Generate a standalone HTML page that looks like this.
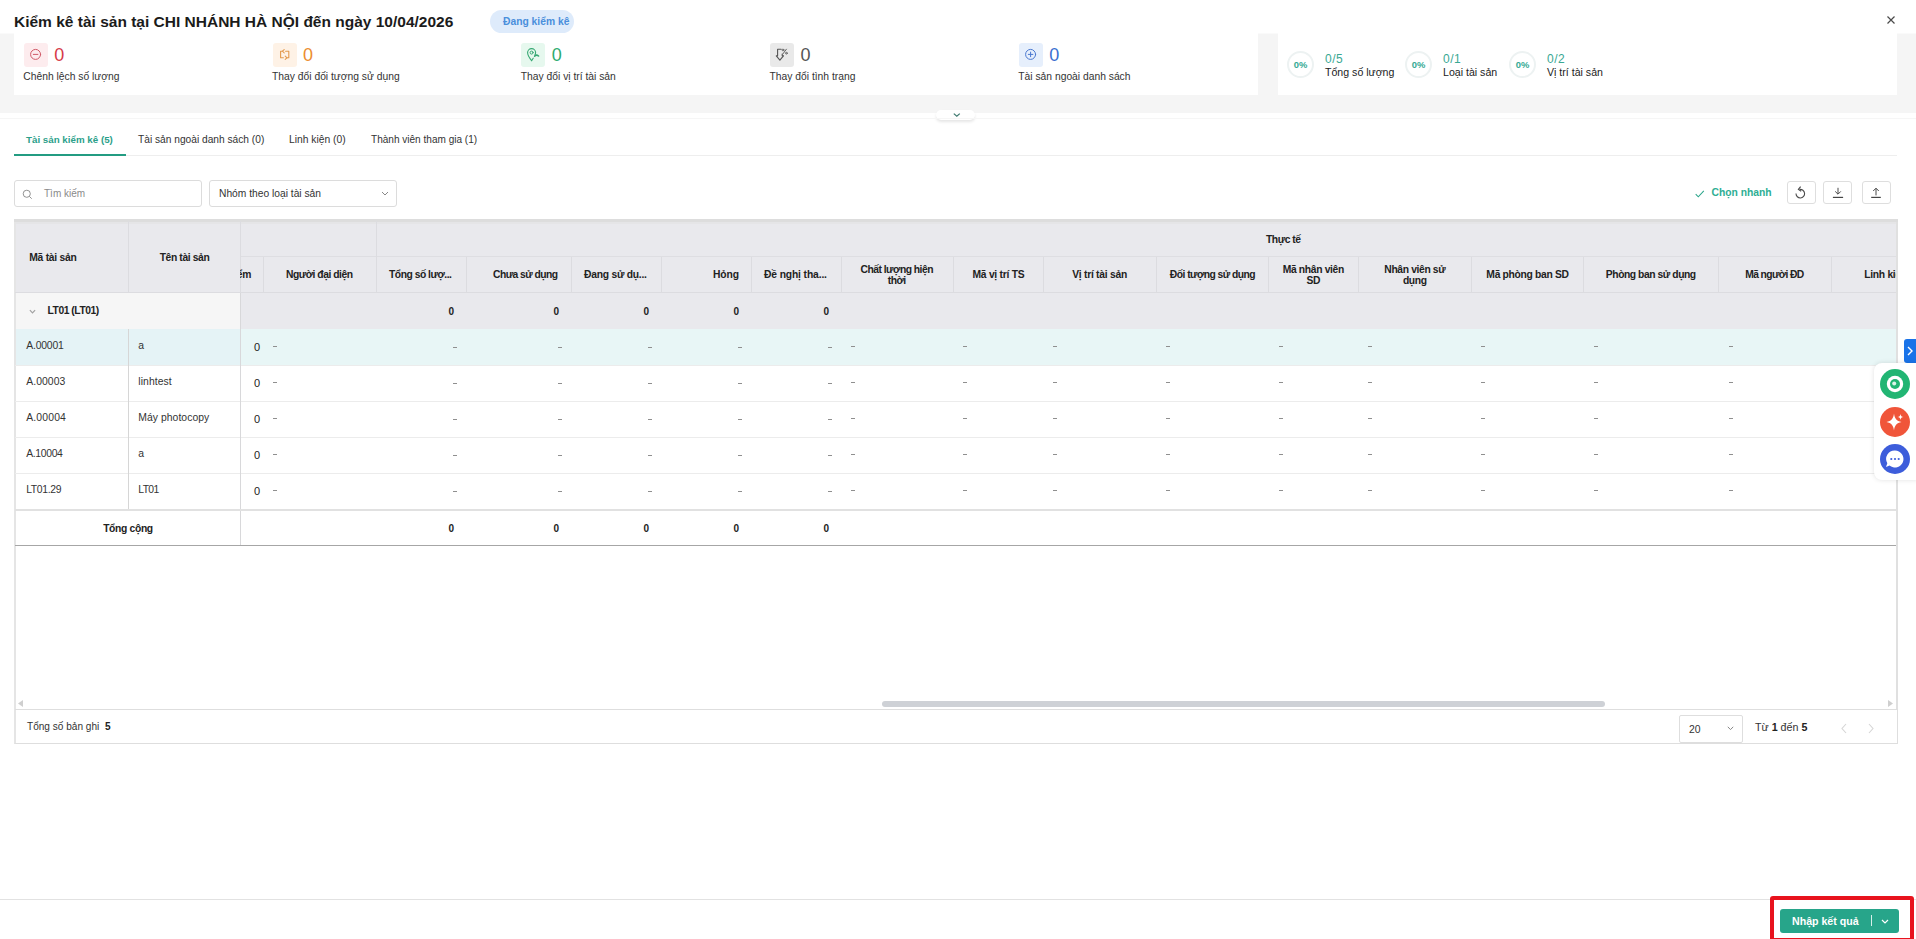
<!DOCTYPE html>
<html lang="vi">
<head>
<meta charset="utf-8">
<title>Kiểm kê tài sản</title>
<style>
*{box-sizing:border-box;margin:0;padding:0}
html,body{width:1916px;height:939px;overflow:hidden;background:#fff}
body{position:relative;font-family:"Liberation Sans",sans-serif;font-size:10.4px;color:#212121}
.a{position:absolute;white-space:nowrap}
.t{position:absolute;white-space:nowrap;line-height:14px}
svg{position:absolute;overflow:visible}
/* header */
#title{left:14px;top:12px;font-size:15.5px;line-height:20px;font-weight:bold;color:#1b1b1b}
#badge{left:490px;top:10px;width:84px;height:23px;border-radius:12px;background:#deebfb;color:#4a8fdc;font-size:10.3px;line-height:23px;text-align:left;padding-left:13px;font-weight:bold}
#band{left:0;top:34px;width:1916px;height:79px;background:#f5f5f5}
.card{position:absolute;background:#fff;top:0;height:61px}
.ib{position:absolute;top:9px;width:24px;height:24px;border-radius:3px}
.num{position:absolute;top:10px;font-size:18px;line-height:22px}
.lbl{position:absolute;top:36px;font-size:10.3px;line-height:14px;color:#333}
.circ{position:absolute;top:17px;width:27px;height:27px;border-radius:50%;border:2px solid #edf2f2;color:#35a994;font-size:9.4px;font-weight:bold;line-height:23px;text-align:center}
.frac{position:absolute;top:18px;font-size:12px;letter-spacing:.55px;line-height:14px;color:#3aa893}
.flbl{position:absolute;top:31px;font-size:10.6px;line-height:14px;color:#222}
/* tabs */
.tab{position:absolute;top:133px;font-size:10.3px;line-height:14px;color:#333;white-space:nowrap}
/* toolbar */
.inp{position:absolute;top:180px;height:27px;border:1px solid #dcdcdc;border-radius:3px;background:#fff}
.ibtn{position:absolute;top:180.6px;width:29px;height:23px;border:1px solid #dedede;border-radius:3px;background:#fff}
/* table */
.hc{position:absolute;font-weight:bold;font-size:10.2px;line-height:11px;color:#222;text-align:center;white-space:nowrap}
.vl{position:absolute;width:1px;background:#dcdce0}
.hl{position:absolute;height:1px;background:#ececec}
.c{position:absolute;font-size:10.4px;line-height:14px;color:#333;white-space:nowrap}
.b{font-weight:bold;color:#222}
.d{color:#777}
</style>
</head>
<body>
<div class="t" id="title">Kiểm kê tài sản tại CHI NHÁNH HÀ NỘI đến ngày 10/04/2026</div>
<div class="a" id="badge">Đang kiểm kê</div>
<svg style="left:1885.5px;top:14.6px" width="10" height="10" viewBox="0 0 10 10"><path d="M1.5 1.5 L8.5 8.5 M8.5 1.5 L1.5 8.5" stroke="#4a4a4a" stroke-width="1.2" fill="none"/></svg>
<div class="a" id="band">
<div class="card" style="left:14px;width:1244px">
<div class="ib" style="left:9.80px;background:#fdecee"><svg style="left:0;top:0" width="24" height="24" viewBox="0 0 24 24" fill="none" stroke="#cf5a68" stroke-linecap="round" stroke-linejoin="round"><circle cx="11.6" cy="11.4" r="5" stroke-width="1"/><path d="M9.3 11.4H13.9" stroke-width="1"/></svg></div>
<div class="num" style="left:40.30px;color:#d63a48">0</div>
<div class="lbl" style="left:9.30px">Chênh lệch số lượng</div>
<div class="ib" style="left:258.55px;background:#fef2e6"><svg style="left:0;top:0" width="24" height="24" viewBox="0 0 24 24" fill="none" stroke="#e39a4e" stroke-linecap="round" stroke-linejoin="round"><path d="M9.4 8.2H7.6V14.8H10.4M13.6 14.8H15.8V8.2H12.6" stroke-width="1.1"/><path d="M11.2 6.6L9.4 8.2L11.2 9.8M12.2 13.2L14 14.8L12.2 16.4" stroke-width="1.1"/></svg></div>
<div class="num" style="left:289.05px;color:#ec8d2f">0</div>
<div class="lbl" style="left:258.05px">Thay đổi đối tượng sử dụng</div>
<div class="ib" style="left:507.30px;background:#e6f8ee"><svg style="left:0;top:0" width="24" height="24" viewBox="0 0 24 24" fill="none" stroke="#37a873" stroke-linecap="round" stroke-linejoin="round"><path d="M10.6 17.6C10.6 17.6 6.6 13 6.6 9.6A4 4 0 0 1 14.6 9.6C14.6 10.4 14.3 11.3 13.9 12.2" stroke-width="1.1"/><circle cx="10.6" cy="9.6" r="1.5" stroke-width="1"/><path d="M10.6 17.6L12.2 15.2" stroke-width="1.1"/><path d="M13.6 13.2C14.6 12 16.2 11.9 17.6 13" stroke-width="1.5"/></svg></div>
<div class="num" style="left:537.80px;color:#2eab6f">0</div>
<div class="lbl" style="left:506.80px">Thay đổi vị trí tài sản</div>
<div class="ib" style="left:756.05px;background:#e9e9e9"><svg style="left:0;top:0" width="24" height="24" viewBox="0 0 24 24" fill="none" stroke="#555555" stroke-linecap="round" stroke-linejoin="round"><path d="M11.2 6.2H7.6V12.8H6.3L9.9 17.2L13.5 12.8H12.2V11" stroke-width="1.1"/><path d="M16.4 6.2L12.8 11" stroke-width="0.9"/><circle cx="13" cy="7" r="0.9" stroke-width="0.8"/><circle cx="16.4" cy="10.2" r="0.9" stroke-width="0.8"/></svg></div>
<div class="num" style="left:786.55px;color:#555555">0</div>
<div class="lbl" style="left:755.55px">Thay đổi tình trạng</div>
<div class="ib" style="left:1004.80px;background:#e6effc"><svg style="left:0;top:0" width="24" height="24" viewBox="0 0 24 24" fill="none" stroke="#4a78d0" stroke-linecap="round" stroke-linejoin="round"><circle cx="11.6" cy="11.4" r="5" stroke-width="1"/><path d="M9.3 11.4H13.9M11.6 9.1V13.7" stroke-width="1"/></svg></div>
<div class="num" style="left:1035.30px;color:#3a6fd0">0</div>
<div class="lbl" style="left:1004.30px">Tài sản ngoài danh sách</div>
</div>
<div class="card" style="left:1278px;width:619px">
<div class="circ" style="left:9px">0%</div><div class="frac" style="left:47px">0/5</div><div class="flbl" style="left:47px">Tổng số lượng</div>
<div class="circ" style="left:127px">0%</div><div class="frac" style="left:165px">0/1</div><div class="flbl" style="left:165px">Loại tài sản</div>
<div class="circ" style="left:231px">0%</div><div class="frac" style="left:269px">0/2</div><div class="flbl" style="left:269px">Vị trí tài sản</div>
</div>
</div>
<div class="a" style="left:0px;top:33px;width:14px;height:1px;background:#fafafa"></div>
<div class="a" style="left:1258px;top:33px;width:20px;height:1px;background:#fafafa"></div>
<div class="a" style="left:1897px;top:33px;width:19px;height:1px;background:#fafafa"></div>
<div class="a" style="left:936px;top:110px;width:39px;height:10px;border-radius:5px;background:#fff;box-shadow:0 2px 3px rgba(0,0,0,.10)"></div>
<svg style="left:952.5px;top:112.8px" width="7.6" height="4" viewBox="0 0 8 4.4"><path d="M0.7 0.7L4 3.6L7.3 0.7" fill="none" stroke="#3f7a70" stroke-width="1.4"/></svg>
<div class="a" style="left:0;top:118px;width:1916px;height:1px;background:#f6f6f6"></div>
<div class="a" style="left:14px;top:155px;width:1883px;height:1px;background:#eeeeee"></div>
<div class="a" style="left:14px;top:154px;width:112px;height:2px;background:#239c82"></div>
<div class="tab" style="left:26px;top:133px;color:#2b9f8a;font-weight:bold;font-size:9.77px">Tài sản kiểm kê (5)</div>
<div class="tab" style="left:138px;font-size:10.2px">Tài sản ngoài danh sách (0)</div>
<div class="tab" style="left:289px">Linh kiện (0)</div>
<div class="tab" style="left:371px;font-size:10.05px">Thành viên tham gia (1)</div>
<div class="inp" style="left:14px;width:188px"></div>
<svg style="left:22px;top:188.5px" width="11" height="11" viewBox="0 0 12 12"><circle cx="5.2" cy="5.2" r="3.9" fill="none" stroke="#888" stroke-width="1"/><path d="M8.1 8.1L10.6 10.6" stroke="#888" stroke-width="1"/></svg>
<div class="t" style="left:44px;top:187px;color:#8a8a8a;font-size:10px">Tìm kiếm</div>
<div class="inp" style="left:209px;width:188px"></div>
<div class="t" style="left:219px;top:187px;color:#333;font-size:10.25px">Nhóm theo loại tài sản</div>
<svg style="left:381px;top:191px" width="8" height="5" viewBox="0 0 8 5"><path d="M1 1L4 4L7 1" fill="none" stroke="#888" stroke-width="1"/></svg>
<svg style="left:1694.5px;top:190px" width="9.5" height="7.8" viewBox="0 0 11 9"><path d="M0.8 4.8L3.8 7.8L10.2 1" fill="none" stroke="#2aa58a" stroke-width="1.2"/></svg>
<div class="t" style="left:1711.5px;top:186px;color:#2eae94;font-weight:bold;font-size:10.32px">Chọn nhanh</div>
<div class="ibtn" style="left:1786.5px"></div><div class="ibtn" style="left:1823.3px"></div><div class="ibtn" style="left:1861.5px"></div>
<svg style="left:1795px;top:186px" width="11" height="13" viewBox="0 0 11 13"><path d="M4.6 3.4A4.3 4.3 0 1 1 1 7.6" fill="none" stroke="#4a4a4a" stroke-width="1.1"/><path d="M5.6 0.6L3.4 3.4L6.2 5.2" fill="none" stroke="#4a4a4a" stroke-width="1.1"/></svg>
<svg style="left:1832.3px;top:186px" width="12" height="13" viewBox="0 0 12 13"><path d="M6 1.8V8M3.2 5.4L6 8.2L8.8 5.4" fill="none" stroke="#4a4a4a" stroke-width="1"/><path d="M0.9 11.4H11.1" stroke="#444" stroke-width="1.2"/></svg>
<svg style="left:1869.5px;top:186px" width="12" height="13" viewBox="0 0 12 13"><path d="M6 9.4V2.4M3.2 5L6 2.2L8.8 5" fill="none" stroke="#4a4a4a" stroke-width="1"/><path d="M1.2 11.4H10.8" stroke="#444" stroke-width="1.2"/></svg>
<div class="a" style="left:14px;top:219px;width:1884px;height:525px;border:1px solid #dedede;border-top:none;border-left:2px solid #e5e5e5"></div>
<div class="a" style="left:16px;top:219px;width:1881px;height:74px;background:#e9e9ed"></div>
<div class="a" style="left:16px;top:222px;width:1881px;height:2px;background:#e5e5e7"></div>
<div class="a" style="left:14px;top:219px;width:1884px;height:3px;background:#dddddd"></div>
<div class="a" style="left:16px;top:293px;width:224px;height:36px;background:#f6f6f6"></div>
<div class="a" style="left:240px;top:293px;width:1657px;height:36px;background:#e9e9ed"></div>
<div class="a" style="left:16px;top:329px;width:224px;height:36px;background:#e5f3f6"></div>
<div class="a" style="left:240px;top:329px;width:1657px;height:36px;background:#e8f6f6"></div>
<div class="hl" style="left:240px;top:256px;width:1657px;background:#dedee2"></div>
<div class="hl" style="left:15px;top:292px;width:1882px;background:#dcdce0"></div>
<div class="vl" style="left:128px;top:221px;height:72px"></div>
<div class="vl" style="left:240px;top:221px;height:72px"></div>
<div class="vl" style="left:376px;top:221px;height:72px"></div>
<div class="vl" style="left:263px;top:257px;height:36px"></div>
<div class="vl" style="left:466px;top:257px;height:36px"></div>
<div class="vl" style="left:571px;top:257px;height:36px"></div>
<div class="vl" style="left:661px;top:257px;height:36px"></div>
<div class="vl" style="left:751px;top:257px;height:36px"></div>
<div class="vl" style="left:841px;top:257px;height:36px"></div>
<div class="vl" style="left:953px;top:257px;height:36px"></div>
<div class="vl" style="left:1043px;top:257px;height:36px"></div>
<div class="vl" style="left:1156px;top:257px;height:36px"></div>
<div class="vl" style="left:1268px;top:257px;height:36px"></div>
<div class="vl" style="left:1358px;top:257px;height:36px"></div>
<div class="vl" style="left:1471px;top:257px;height:36px"></div>
<div class="vl" style="left:1583px;top:257px;height:36px"></div>
<div class="vl" style="left:1718px;top:257px;height:36px"></div>
<div class="vl" style="left:1831px;top:257px;height:36px"></div>
<div class="hl" style="left:15px;top:365px;width:1882px"></div>
<div class="hl" style="left:15px;top:401px;width:1882px"></div>
<div class="hl" style="left:15px;top:437px;width:1882px"></div>
<div class="hl" style="left:15px;top:473px;width:1882px"></div>
<div class="vl" style="left:128px;top:329px;height:180px;background:#d6d6d6"></div>
<div class="vl" style="left:240px;top:293px;height:252px;background:#d8d8da"></div>
<div class="a" style="left:15px;top:509px;width:1882px;height:2px;background:#e1e1e1"></div>
<div class="a" style="left:15px;top:545px;width:1882px;height:1px;background:#a6a6a6"></div>
<div class="hc" style="left:29.3px;top:251.5px;text-align:left;font-size:10.3px;letter-spacing:-0.266px">Mã tài sản</div>
<div class="hc" style="left:84.50999999999999px;width:200px;top:251.5px;font-size:10.3px;letter-spacing:-0.38px">Tên tài sản</div>
<div class="hc" style="left:1183.268px;width:200px;top:233.5px;font-size:10.3px;letter-spacing:-0.464px">Thực tế</div>
<div class="a" style="left:240px;top:257px;width:23px;height:35px;overflow:hidden"><div class="hc" style="right:12px;top:11.5px;text-align:right;font-size:10.3px;letter-spacing:-.3px">Kiểm</div></div>
<div class="hc" style="left:219.2635px;width:200px;top:268.5px;font-size:10.3px;letter-spacing:-0.473px">Người đại diện</div>
<div class="hc" style="left:301.528px;width:150px;top:268.5px;text-align:right;font-size:10.3px;letter-spacing:-0.472px">Tổng số lượ...</div>
<div class="hc" style="left:407.456px;width:150px;top:268.5px;text-align:right;font-size:10.3px;letter-spacing:-0.544px">Chưa sử dụng</div>
<div class="hc" style="left:496.765px;width:150px;top:268.5px;text-align:right;font-size:10.3px;letter-spacing:-0.235px">Đang sử dụ...</div>
<div class="hc" style="left:588.896px;width:150px;top:268.5px;text-align:right;font-size:10.3px;letter-spacing:-0.104px">Hỏng</div>
<div class="hc" style="left:676.873px;width:150px;top:268.5px;text-align:right;font-size:10.3px;letter-spacing:-0.127px">Đề nghị tha...</div>
<div class="hc" style="left:796.75px;width:200px;top:263.8px;font-size:10.3px;letter-spacing:-0.5px">Chất lượng hiện<br>thời</div>
<div class="hc" style="left:898.48px;width:200px;top:268.5px;font-size:10.3px;letter-spacing:-0.24px">Mã vị trí TS</div>
<div class="hc" style="left:999.57px;width:200px;top:268.5px;font-size:10.3px;letter-spacing:-0.26px">Vị trí tài sản</div>
<div class="hc" style="left:1112.4305px;width:200px;top:268.5px;font-size:10.3px;letter-spacing:-0.539px">Đối tượng sử dụng</div>
<div class="hc" style="left:1213.3345px;width:200px;top:263.8px;font-size:10.3px;letter-spacing:-0.331px">Mã nhân viên<br>SD</div>
<div class="hc" style="left:1314.82px;width:200px;top:263.8px;font-size:10.3px;letter-spacing:-0.36px">Nhân viên sử<br>dụng</div>
<div class="hc" style="left:1427.5475000000001px;width:200px;top:268.5px;font-size:10.3px;letter-spacing:-0.305px">Mã phòng ban SD</div>
<div class="hc" style="left:1550.782px;width:200px;top:268.5px;font-size:10.3px;letter-spacing:-0.436px">Phòng ban sử dụng</div>
<div class="hc" style="left:1674.4935px;width:200px;top:268.5px;font-size:10.3px;letter-spacing:-0.613px">Mã người ĐD</div>
<div class="a" style="left:1831px;top:257px;width:66px;height:35px;overflow:hidden"><div class="hc" style="left:33.3px;top:11.5px;text-align:left;font-size:10.3px;letter-spacing:-.3px">Linh kiện</div></div>
<svg style="left:28.7px;top:309px" width="7" height="5" viewBox="0 0 8 5"><path d="M1 1L4 4L7 1" fill="none" stroke="#a2a2a2" stroke-width="1.4"/></svg>
<div class="c b" style="left:47.5px;top:304px;font-size:10.3px;letter-spacing:-0.457px">LT01 (LT01)</div>
<div class="c b" style="left:404px;width:50px;text-align:right;top:305px;font-size:10px">0</div>
<div class="c b" style="left:404px;width:50px;text-align:right;top:522px;font-size:10px">0</div>
<div class="c b" style="left:509px;width:50px;text-align:right;top:305px;font-size:10px">0</div>
<div class="c b" style="left:509px;width:50px;text-align:right;top:522px;font-size:10px">0</div>
<div class="c b" style="left:599px;width:50px;text-align:right;top:305px;font-size:10px">0</div>
<div class="c b" style="left:599px;width:50px;text-align:right;top:522px;font-size:10px">0</div>
<div class="c b" style="left:689px;width:50px;text-align:right;top:305px;font-size:10px">0</div>
<div class="c b" style="left:689px;width:50px;text-align:right;top:522px;font-size:10px">0</div>
<div class="c b" style="left:779px;width:50px;text-align:right;top:305px;font-size:10px">0</div>
<div class="c b" style="left:779px;width:50px;text-align:right;top:522px;font-size:10px">0</div>
<div class="c b" style="left:78px;width:100px;text-align:center;top:522px;font-size:10.3px;letter-spacing:-0.328px">Tổng cộng</div>
<div class="c" style="left:26.2px;top:339px;font-size:10.4px;letter-spacing:-0.174px">A.00001</div>
<div class="c" style="left:138.3px;top:339px;font-size:10.4px;letter-spacing:0px">a</div>
<div class="c" style="left:210px;width:50px;text-align:right;top:340px;color:#222;font-size:11px">0</div>
<div class="a" style="left:273px;top:346px;width:3.6px;height:1.2px;background:#8f8f8f"></div>
<div class="a" style="left:851px;top:346px;width:3.6px;height:1.2px;background:#8f8f8f"></div>
<div class="a" style="left:963px;top:346px;width:3.6px;height:1.2px;background:#8f8f8f"></div>
<div class="a" style="left:1053px;top:346px;width:3.6px;height:1.2px;background:#8f8f8f"></div>
<div class="a" style="left:1166px;top:346px;width:3.6px;height:1.2px;background:#8f8f8f"></div>
<div class="a" style="left:1279px;top:346px;width:3.6px;height:1.2px;background:#8f8f8f"></div>
<div class="a" style="left:1368px;top:346px;width:3.6px;height:1.2px;background:#8f8f8f"></div>
<div class="a" style="left:1481px;top:346px;width:3.6px;height:1.2px;background:#8f8f8f"></div>
<div class="a" style="left:1594px;top:346px;width:3.6px;height:1.2px;background:#8f8f8f"></div>
<div class="a" style="left:1729px;top:346px;width:3.6px;height:1.2px;background:#8f8f8f"></div>
<div class="a" style="left:453px;top:347px;width:3.6px;height:1.2px;background:#8f8f8f"></div>
<div class="a" style="left:558px;top:347px;width:3.6px;height:1.2px;background:#8f8f8f"></div>
<div class="a" style="left:648px;top:347px;width:3.6px;height:1.2px;background:#8f8f8f"></div>
<div class="a" style="left:738px;top:347px;width:3.6px;height:1.2px;background:#8f8f8f"></div>
<div class="a" style="left:828px;top:347px;width:3.6px;height:1.2px;background:#8f8f8f"></div>
<div class="c" style="left:26.2px;top:375px;font-size:10.4px;letter-spacing:0.076px">A.00003</div>
<div class="c" style="left:138.3px;top:375px;font-size:10.4px;letter-spacing:0.064px">linhtest</div>
<div class="c" style="left:210px;width:50px;text-align:right;top:376px;color:#222;font-size:11px">0</div>
<div class="a" style="left:273px;top:382px;width:3.6px;height:1.2px;background:#8f8f8f"></div>
<div class="a" style="left:851px;top:382px;width:3.6px;height:1.2px;background:#8f8f8f"></div>
<div class="a" style="left:963px;top:382px;width:3.6px;height:1.2px;background:#8f8f8f"></div>
<div class="a" style="left:1053px;top:382px;width:3.6px;height:1.2px;background:#8f8f8f"></div>
<div class="a" style="left:1166px;top:382px;width:3.6px;height:1.2px;background:#8f8f8f"></div>
<div class="a" style="left:1279px;top:382px;width:3.6px;height:1.2px;background:#8f8f8f"></div>
<div class="a" style="left:1368px;top:382px;width:3.6px;height:1.2px;background:#8f8f8f"></div>
<div class="a" style="left:1481px;top:382px;width:3.6px;height:1.2px;background:#8f8f8f"></div>
<div class="a" style="left:1594px;top:382px;width:3.6px;height:1.2px;background:#8f8f8f"></div>
<div class="a" style="left:1729px;top:382px;width:3.6px;height:1.2px;background:#8f8f8f"></div>
<div class="a" style="left:453px;top:383px;width:3.6px;height:1.2px;background:#8f8f8f"></div>
<div class="a" style="left:558px;top:383px;width:3.6px;height:1.2px;background:#8f8f8f"></div>
<div class="a" style="left:648px;top:383px;width:3.6px;height:1.2px;background:#8f8f8f"></div>
<div class="a" style="left:738px;top:383px;width:3.6px;height:1.2px;background:#8f8f8f"></div>
<div class="a" style="left:828px;top:383px;width:3.6px;height:1.2px;background:#8f8f8f"></div>
<div class="c" style="left:26.2px;top:411px;font-size:10.4px;letter-spacing:0.159px">A.00004</div>
<div class="c" style="left:138.3px;top:411px;font-size:10.4px;letter-spacing:0.04px">Máy photocopy</div>
<div class="c" style="left:210px;width:50px;text-align:right;top:412px;color:#222;font-size:11px">0</div>
<div class="a" style="left:273px;top:418px;width:3.6px;height:1.2px;background:#8f8f8f"></div>
<div class="a" style="left:851px;top:418px;width:3.6px;height:1.2px;background:#8f8f8f"></div>
<div class="a" style="left:963px;top:418px;width:3.6px;height:1.2px;background:#8f8f8f"></div>
<div class="a" style="left:1053px;top:418px;width:3.6px;height:1.2px;background:#8f8f8f"></div>
<div class="a" style="left:1166px;top:418px;width:3.6px;height:1.2px;background:#8f8f8f"></div>
<div class="a" style="left:1279px;top:418px;width:3.6px;height:1.2px;background:#8f8f8f"></div>
<div class="a" style="left:1368px;top:418px;width:3.6px;height:1.2px;background:#8f8f8f"></div>
<div class="a" style="left:1481px;top:418px;width:3.6px;height:1.2px;background:#8f8f8f"></div>
<div class="a" style="left:1594px;top:418px;width:3.6px;height:1.2px;background:#8f8f8f"></div>
<div class="a" style="left:1729px;top:418px;width:3.6px;height:1.2px;background:#8f8f8f"></div>
<div class="a" style="left:453px;top:419px;width:3.6px;height:1.2px;background:#8f8f8f"></div>
<div class="a" style="left:558px;top:419px;width:3.6px;height:1.2px;background:#8f8f8f"></div>
<div class="a" style="left:648px;top:419px;width:3.6px;height:1.2px;background:#8f8f8f"></div>
<div class="a" style="left:738px;top:419px;width:3.6px;height:1.2px;background:#8f8f8f"></div>
<div class="a" style="left:828px;top:419px;width:3.6px;height:1.2px;background:#8f8f8f"></div>
<div class="c" style="left:26.2px;top:447px;font-size:10.4px;letter-spacing:-0.341px">A.10004</div>
<div class="c" style="left:138.3px;top:447px;font-size:10.4px;letter-spacing:0px">a</div>
<div class="c" style="left:210px;width:50px;text-align:right;top:448px;color:#222;font-size:11px">0</div>
<div class="a" style="left:273px;top:454px;width:3.6px;height:1.2px;background:#8f8f8f"></div>
<div class="a" style="left:851px;top:454px;width:3.6px;height:1.2px;background:#8f8f8f"></div>
<div class="a" style="left:963px;top:454px;width:3.6px;height:1.2px;background:#8f8f8f"></div>
<div class="a" style="left:1053px;top:454px;width:3.6px;height:1.2px;background:#8f8f8f"></div>
<div class="a" style="left:1166px;top:454px;width:3.6px;height:1.2px;background:#8f8f8f"></div>
<div class="a" style="left:1279px;top:454px;width:3.6px;height:1.2px;background:#8f8f8f"></div>
<div class="a" style="left:1368px;top:454px;width:3.6px;height:1.2px;background:#8f8f8f"></div>
<div class="a" style="left:1481px;top:454px;width:3.6px;height:1.2px;background:#8f8f8f"></div>
<div class="a" style="left:1594px;top:454px;width:3.6px;height:1.2px;background:#8f8f8f"></div>
<div class="a" style="left:1729px;top:454px;width:3.6px;height:1.2px;background:#8f8f8f"></div>
<div class="a" style="left:453px;top:455px;width:3.6px;height:1.2px;background:#8f8f8f"></div>
<div class="a" style="left:558px;top:455px;width:3.6px;height:1.2px;background:#8f8f8f"></div>
<div class="a" style="left:648px;top:455px;width:3.6px;height:1.2px;background:#8f8f8f"></div>
<div class="a" style="left:738px;top:455px;width:3.6px;height:1.2px;background:#8f8f8f"></div>
<div class="a" style="left:828px;top:455px;width:3.6px;height:1.2px;background:#8f8f8f"></div>
<div class="c" style="left:26.2px;top:483px;font-size:10.4px;letter-spacing:-0.348px">LT01.29</div>
<div class="c" style="left:138.3px;top:483px;font-size:10.4px;letter-spacing:-0.643px">LT01</div>
<div class="c" style="left:210px;width:50px;text-align:right;top:484px;color:#222;font-size:11px">0</div>
<div class="a" style="left:273px;top:490px;width:3.6px;height:1.2px;background:#8f8f8f"></div>
<div class="a" style="left:851px;top:490px;width:3.6px;height:1.2px;background:#8f8f8f"></div>
<div class="a" style="left:963px;top:490px;width:3.6px;height:1.2px;background:#8f8f8f"></div>
<div class="a" style="left:1053px;top:490px;width:3.6px;height:1.2px;background:#8f8f8f"></div>
<div class="a" style="left:1166px;top:490px;width:3.6px;height:1.2px;background:#8f8f8f"></div>
<div class="a" style="left:1279px;top:490px;width:3.6px;height:1.2px;background:#8f8f8f"></div>
<div class="a" style="left:1368px;top:490px;width:3.6px;height:1.2px;background:#8f8f8f"></div>
<div class="a" style="left:1481px;top:490px;width:3.6px;height:1.2px;background:#8f8f8f"></div>
<div class="a" style="left:1594px;top:490px;width:3.6px;height:1.2px;background:#8f8f8f"></div>
<div class="a" style="left:1729px;top:490px;width:3.6px;height:1.2px;background:#8f8f8f"></div>
<div class="a" style="left:453px;top:491px;width:3.6px;height:1.2px;background:#8f8f8f"></div>
<div class="a" style="left:558px;top:491px;width:3.6px;height:1.2px;background:#8f8f8f"></div>
<div class="a" style="left:648px;top:491px;width:3.6px;height:1.2px;background:#8f8f8f"></div>
<div class="a" style="left:738px;top:491px;width:3.6px;height:1.2px;background:#8f8f8f"></div>
<div class="a" style="left:828px;top:491px;width:3.6px;height:1.2px;background:#8f8f8f"></div>
<div class="a" style="left:1896px;top:222px;width:2px;height:487px;background:#e0e0e0"></div>
<div class="a" style="left:882px;top:701px;width:723px;height:6px;border-radius:3px;background:#ced1d6"></div>
<svg style="left:18px;top:700px" width="5" height="7" viewBox="0 0 5 7"><path d="M5 0L0 3.5L5 7Z" fill="#cfcfcf"/></svg>
<svg style="left:1888px;top:700px" width="5" height="7" viewBox="0 0 5 7"><path d="M0 0L5 3.5L0 7Z" fill="#cfcfcf"/></svg>
<div class="a" style="left:15px;top:709px;width:1882px;height:1px;background:#dedede"></div>
<div class="t" style="left:27px;top:720px;color:#333;font-size:10.08px">Tổng số bản ghi&nbsp;&nbsp;<b style="color:#222">5</b></div>
<div class="a" style="left:1679px;top:715px;width:64px;height:28px;border:1px solid #dedede;border-radius:2px;background:#fff"></div>
<div class="t" style="left:1689px;top:723px;color:#333;font-size:10.4px">20</div>
<svg style="left:1727px;top:726px" width="7" height="5" viewBox="0 0 7 5"><path d="M0.8 0.8L3.5 3.6L6.2 0.8" fill="none" stroke="#888" stroke-width="1"/></svg>
<div class="t" style="left:1755px;top:720px;color:#333;font-size:10.7px">Từ <b style="color:#222">1</b> đến <b style="color:#222">5</b></div>
<svg style="left:1841px;top:723px" width="6" height="11" viewBox="0 0 6 11"><path d="M5 1L1 5.5L5 10" fill="none" stroke="#d5d5d5" stroke-width="1.1"/></svg>
<svg style="left:1868px;top:723px" width="6" height="11" viewBox="0 0 6 11"><path d="M1 1L5 5.5L1 10" fill="none" stroke="#d5d5d5" stroke-width="1.1"/></svg>
<div class="a" style="left:1904px;top:339px;width:12px;height:24px;border-radius:3px 0 0 3px;background:#1a73e8"></div>
<svg style="left:1907px;top:346px" width="6" height="10" viewBox="0 0 6 10"><path d="M1 1L5 5L1 9" fill="none" stroke="#fff" stroke-width="1.4"/></svg>
<div class="a" style="left:1874px;top:363px;width:44px;height:117px;border-radius:8px 0 0 8px;background:#fff;box-shadow:0 0 5px rgba(0,0,0,.12)"></div>
<svg style="left:1880px;top:369px" width="30" height="30" viewBox="0 0 30 30"><circle cx="15" cy="15" r="15" fill="#21b573"/><circle cx="15" cy="15" r="8.2" fill="#fff"/><circle cx="15" cy="15" r="5" fill="#21b573"/><circle cx="14.2" cy="14.6" r="2" fill="#fff" opacity=".85"/></svg>
<svg style="left:1880px;top:407px" width="30" height="30" viewBox="0 0 30 30"><circle cx="15" cy="15" r="15" fill="#f0553a"/><path d="M14 6.5C14.6 11.5 16.5 14 21.5 15C16.5 16 14.6 18.5 14 23.5C13.4 18.5 11.5 16 6.5 15C11.5 14 13.4 11.5 14 6.5Z" fill="#fff"/><path d="M20.5 7C20.8 9 21.5 9.7 23.5 10C21.5 10.3 20.8 11 20.5 13C20.2 11 19.5 10.3 17.5 10C19.5 9.7 20.2 9 20.5 7Z" fill="#fff"/></svg>
<svg style="left:1880px;top:444px" width="30" height="30" viewBox="0 0 30 30"><circle cx="15" cy="15" r="15" fill="#3d5ddb"/><path d="M15 6.5A8.5 8.5 0 1 1 9.5 21.5L6 23L7.3 19.2A8.5 8.5 0 0 1 15 6.5Z" fill="#fff"/><circle cx="11.3" cy="15" r="1.1" fill="#3d5ddb"/><circle cx="15" cy="15" r="1.1" fill="#3d5ddb"/><circle cx="18.7" cy="15" r="1.1" fill="#3d5ddb"/></svg>
<div class="a" style="left:0;top:899px;width:1916px;height:1px;background:#e2e2e2"></div>
<div class="a" style="left:1770px;top:896px;width:144px;height:46px;border:4px solid #e8131d;border-radius:3px;background:#fff"></div>
<div class="a" style="left:1780px;top:909px;width:119px;height:24px;border-radius:3px;background:#27a58a"></div>
<div class="t" style="left:1792px;top:914px;color:#fff;font-weight:bold;font-size:10.62px">Nhập kết quả</div>
<div class="a" style="left:1871px;top:915px;width:1px;height:11px;background:#d6efe9"></div>
<svg style="left:1881px;top:919px" width="8" height="5" viewBox="0 0 8 5"><path d="M1 1L4 4L7 1" fill="none" stroke="#fff" stroke-width="1.2"/></svg>
</body>
</html>
